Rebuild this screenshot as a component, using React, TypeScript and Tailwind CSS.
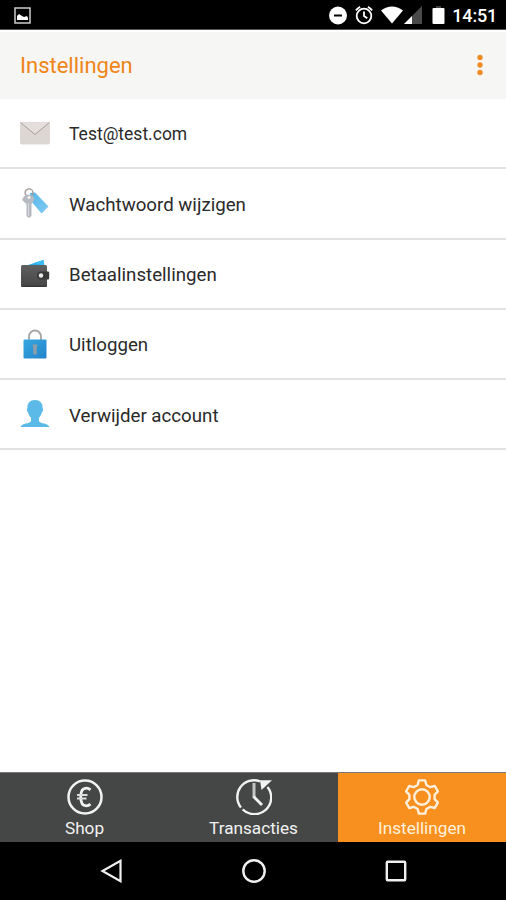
import type { ReactNode } from "react";

function StatusBar() {
  return (
    <div className="flex h-[30px] items-center border-b border-[#555] bg-black pl-[14px] pr-[9px]">
      <svg width="17" height="17" viewBox="0 0 17 17" className="mt-[2px]">
        <rect x="1" y="1" width="15" height="15" fill="none" stroke="#ccc" strokeWidth="1.5" />
        <path d="M3 13V9l2-2 3 2 2 1 3-1 1 2v2z" fill="#fff" />
      </svg>
      <svg width="120" height="22" viewBox="0 0 120 22" className="ml-auto">
        <circle cx="10" cy="11.5" r="9" fill="#fff" />
        <path d="M6 11.5h8" stroke="#000" strokeWidth="2" />
        <circle cx="36" cy="12" r="7.3" fill="none" stroke="#fff" strokeWidth="1.8" />
        <path d="M36 7.5V12l3.3 2.3M27.8 6.2l4.2-3.4M44.2 6.2L40 2.8" fill="none" stroke="#fff" strokeWidth="1.8" />
        <path d="M53 6.5Q64 -1.5 75 6.5L64 19.5z" fill="#fff" />
        <path d="M94 2v18H76z" fill="#4a4a4a" />
        <path d="M84 12v8H76z" fill="#fff" />
        <path d="M108 2h5v2h-5z" fill="#444" />
        <rect x="104.500" y="4" width="12" height="16" rx="1" fill="#fff" />
      </svg>
      <span className="ml-[4px] mt-[2px] text-[18px] font-medium tracking-[-0.2px] text-white">14:51</span>
    </div>
  );
}

function Header() {
  return (
    <header className="flex h-[69px] items-center justify-between border-t-2 border-white bg-[#f6f6f5] pl-5 pr-[22px]">
      <h1 className="-mt-px text-[22px] text-[#ef8417]">Instellingen</h1>
      <svg width="8" height="22" viewBox="0 0 8 22" fill="#ef8c22" className="-mt-px">
        <circle cx="4" cy="3.500" r="2.700" />
        <circle cx="4" cy="11" r="2.700" />
        <circle cx="4" cy="18.500" r="2.700" />
      </svg>
    </header>
  );
}

function MailIcon() {
  return (
    <svg width="30" height="30" viewBox="0 0 30 30">
      <rect y="4" width="30" height="22.500" rx="2" fill="#ddd7d4" />
      <path d="M.5 4.500h29L15 16.500z" fill="#e4dfdc" />
      <path d="M.5 4.500L15 16.500 29.500 4.500" fill="none" stroke="#a99c99" strokeWidth="1" />
    </svg>
  );
}

function KeyIcon() {
  return (
    <svg width="30" height="30" viewBox="0 0 30 30">
      <defs>
        <linearGradient id="tag" x1="0" y1="0" x2="1" y2="1">
          <stop offset="0" stopColor="#56b4e8" />
          <stop offset="1" stopColor="#7fccf3" />
        </linearGradient>
      </defs>
      <path d="M10 5l5-.5L28.500 18.500 21.500 25.500 11 13z" fill="url(#tag)" />
      <circle cx="9" cy="4.800" r="3.900" fill="none" stroke="#a39b97" strokeWidth="1.400" />
      <path d="M4 8q4-3 9 0l1.500 3.500L11.500 16v12L9 30l-2.500-2V16L2 12z" fill="#b7bac1" />
      <path d="M8.500 15v13" stroke="#d7d9dd" strokeWidth="1" />
      <circle cx="9" cy="9.500" r="1.500" fill="#f3f3f3" />
    </svg>
  );
}

function WalletIcon() {
  return (
    <svg width="30" height="30" viewBox="0 0 30 30">
      <defs>
        <linearGradient id="leather" x1="0" y1="0" x2="0" y2="1">
          <stop offset="0" stopColor="#606060" />
          <stop offset="1" stopColor="#454545" />
        </linearGradient>
      </defs>
      <path d="M5 7L23.500 1l1 7z" fill="#2aa9e8" />
      <path d="M14 4L23.500 1l1 6z" fill="#39bdf5" />
      <rect x="1" y="6" width="26" height="22" rx="1.500" fill="url(#leather)" />
      <path d="M1.500 27.300h25" stroke="#333" strokeWidth="1" />
      <path d="M21 12.500h7q1.200 0 1.200 1.200v5.600q0 1.200-1.200 1.200h-7a4 4 0 010-8z" fill="#393939" />
      <circle cx="21" cy="16.500" r="2.200" fill="#eee" />
    </svg>
  );
}

function LockIcon() {
  return (
    <svg width="30" height="30" viewBox="0 0 30 30">
      <defs>
        <linearGradient id="lock" x1="0" y1="0" x2="1" y2="1">
          <stop offset="0" stopColor="#36a8df" />
          <stop offset="1" stopColor="#2383cc" />
        </linearGradient>
      </defs>
      <path d="M9 12V7.500a6 6 0 0112 0V12" fill="none" stroke="#a5a5a5" strokeWidth="1.800" />
      <rect x="3.500" y="10.500" width="23" height="19" rx="1" fill="url(#lock)" />
      <path d="M12.500 15.500h5l-.8 4v6h-3.400v-6z" fill="#8e9da8" />
    </svg>
  );
}

function UserIcon() {
  return (
    <svg width="30" height="30" viewBox="0 0 30 30" fill="#5cbae9">
      <path d="M15 1c5 0 7.800 3.300 7.600 8.200 1 .6.500 3.500-.8 4.400-.5 2.500-1.600 4-2.800 5.200v3.400c1.500 2.500 9 1.800 10.500 5.800H.5c1.500-4 9-3.300 10.500-5.800v-3.400c-1.200-1.200-2.300-2.700-2.800-5.200-1.300-.9-1.800-3.800-.8-4.400C7.200 4.300 10 1 15 1z" />
    </svg>
  );
}

const settings = [
  { label: "Test@test.com", icon: <MailIcon />, style: "pt-[2px] text-[17.5px]" },
  { label: "Wachtwoord wijzigen", icon: <KeyIcon />, style: "pt-[3px] text-[18.7px]" },
  { label: "Betaalinstellingen", icon: <WalletIcon />, style: "pt-[2px] text-[18.7px]" },
  { label: "Uitloggen", icon: <LockIcon />, style: "pt-[2px] text-[18.7px]" },
  { label: "Verwijder account", icon: <UserIcon />, style: "pt-[3px] text-[18.7px]" },
];

function EuroIcon() {
  return (
    <svg width="36" height="36" viewBox="0 0 36 36" fill="none" stroke="#f2f2f2">
      <circle cx="18" cy="18" r="16.500" strokeWidth="2.500" />
      <path d="M23.500 10.800q-2-1.600-4.200-1.600c-4 0-5.600 3.800-5.600 8.800s1.600 8.800 5.600 8.800q2.200 0 4.200-1.600" strokeWidth="2.800" />
      <path d="M10 16h10.500M10 19.500h9.500" strokeWidth="2" stroke="#dcdcdc" />
    </svg>
  );
}

function HistoryIcon() {
  return (
    <svg width="36" height="36" viewBox="0 0 36 36" fill="none" stroke="#f2f2f2">
      <path d="M24 2.400A16.700 16.700 0 005 28.500M6.700 30.300A16.700 16.700 0 0031.500 8" strokeWidth="2.400" />
      <path d="M18 4v14.500" strokeWidth="3" stroke="#c4c4c4" />
      <path d="M17.500 17.500L26 26" strokeWidth="2.800" />
      <path d="M24 1.200h12l-3.500 3.300-7 6.500z" fill="#f2f2f2" stroke="none" />
    </svg>
  );
}

function GearIcon() {
  return (
    <svg width="36" height="36" viewBox="-18 -18 36 36" fill="none" stroke="#fff0dd" strokeWidth="2.400" strokeLinejoin="round">
      <path d="M-3.100-16.600H3.100L4.400-12 8.200-9.800 12.800-11 15.900-5.600 12.600-2.200V2.200L15.900 5.600 12.800 11 8.200 9.800 4.400 12 3.100 16.600H-3.100L-4.400 12-8.200 9.800-12.800 11-15.900 5.600-12.600 2.200V-2.200L-15.900-5.600-12.800-11-8.200-9.800-4.400-12z" />
      <circle r="7.700" />
    </svg>
  );
}

function Tab({ label, icon, active }: { label: string; icon: ReactNode; active?: boolean }) {
  return (
    <div
      className={`flex flex-col items-center pt-[6px] text-[17.2px] leading-[26px] ${
        active ? "w-[168px] bg-[#f7901e] text-[#fff0dd]" : "w-[169px] bg-[#454746] text-[#f2f2f2]"
      }`}
    >
      {icon}
      <span>{label}</span>
    </div>
  );
}

export default function App() {
  return (
    <div className="flex h-[900px] w-[506px] flex-col bg-white font-['Roboto',sans-serif]">
      <StatusBar />
      <Header />
      <ul className="flex-1">
        {settings.map((item) => (
          <li key={item.label} className="flex h-[70.25px] items-center border-b-2 border-[#e2e2e2] pl-5">
            {item.icon}
            <span className={`ml-[19px] text-[#2a2a2a] ${item.style}`}>{item.label}</span>
          </li>
        ))}
      </ul>
      <nav className="flex h-[70px] border-t border-[#777]">
        <Tab label="Shop" icon={<EuroIcon />} />
        <Tab label="Transacties" icon={<HistoryIcon />} />
        <Tab label="Instellingen" icon={<GearIcon />} active />
      </nav>
      <div className="flex h-[58px] items-center justify-between bg-black pl-[100px] pr-[98px]">
        <svg width="24" height="24" viewBox="0 0 24 24" fill="none" stroke="#f0f0f0" strokeWidth="2.200">
          <path d="M20.500 1.800v20.400L2.500 12z" />
        </svg>
        <svg width="24" height="24" viewBox="0 0 24 24" fill="none" stroke="#f0f0f0" strokeWidth="2.400">
          <circle cx="12" cy="12" r="10.700" />
        </svg>
        <svg width="24" height="24" viewBox="0 0 24 24" fill="none" stroke="#f0f0f0" strokeWidth="2.400">
          <rect x="2.800" y="2.800" width="18.400" height="18.400" rx="1" />
        </svg>
      </div>
    </div>
  );
}
